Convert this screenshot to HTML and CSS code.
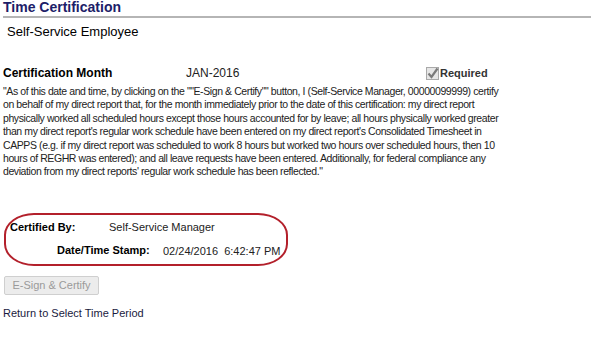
FILE: index.html
```html
<!DOCTYPE html>
<html lang="en">
<head>
    <meta charset="UTF-8">
    <title>Time Certification</title>
    <link rel="stylesheet" href="styles.css">
</head>
<body>
    <div class="page">
        <h1 class="page-title">Time Certification</h1>
        <div class="employee">Self-Service Employee</div>

        <div class="month-row">
            <span class="label month-label">Certification Month</span>
            <span class="month-value">JAN-2016</span>
            <label class="required">
                <span class="check">
                    <svg width="13" height="13" viewBox="0 0 13 13">
                        <rect x="0.5" y="0.5" width="12" height="12" fill="#e6e6e6" stroke="#a9a9a9"/>
                        <path d="M2.5 6.5 L5.5 10 L11.5 1.5" fill="none" stroke="#7a7a7a" stroke-width="2.2"/>
                    </svg>
                </span>
                Required
            </label>
        </div>

        <p class="statement">"As of this date and time, by clicking on the ""E-Sign &amp; Certify"" button, I (Self-Service Manager, 00000099999) certify<br>
            on behalf of my direct report that, for the month immediately prior to the date of this certification: my direct report<br>
            physically worked all scheduled hours except those hours accounted for by leave; all hours physically worked greater<br>
            than my direct report's regular work schedule have been entered on my direct report's Consolidated Timesheet in<br>
            CAPPS (e.g. if my direct report was scheduled to work 8 hours but worked two hours over scheduled hours, then 10<br>
            hours of REGHR was entered); and all leave requests have been entered. Additionally, for federal compliance any<br>
            deviation from my direct reports' regular work schedule has been reflected."</p>

        <div class="certified">
            <div class="cert-row">
                <span class="label cert-by">Certified By:</span>
                <span class="cert-value">Self-Service Manager</span>
            </div>
            <div class="cert-row">
                <span class="label cert-stamp">Date/Time Stamp:</span>
                <span class="cert-value stamp-value">02/24/2016&nbsp;&nbsp;6:42:47 PM</span>
            </div>
        </div>

        <button class="sign-btn" disabled>E-Sign &amp; Certify</button>

        <a class="return-link" href="#">Return to Select Time Period</a>
    </div>
</body>
</html>
```

FILE: styles.css
```css
* {
    margin: 0;
    padding: 0;
    box-sizing: border-box;
    font-family: 'Liberation Sans', Arial, sans-serif;
}

body {
    background: #fff;
    color: #000;
}

.page {
    width: 600px;
    padding: 0 10px 0 3px;
}

.page-title {
    font-size: 14px;
    font-weight: bold;
    color: #1c2068;
    line-height: 15px;
    padding-bottom: 1px;
    border-bottom: 2px solid #b5b5b5;
    width: 588px;
}

.employee {
    font-size: 13px;
    margin: 6px 0 0 4px;
    line-height: 16px;
}

.month-row {
    display: flex;
    align-items: center;
    margin-top: 25px;
    height: 16px;
}

.label {
    font-weight: bold;
}

.month-label {
    width: 183px;
    font-size: 12px;
}

.month-value {
    width: 240px;
    font-size: 12px;
    color: #222;
}

.required {
    display: flex;
    align-items: center;
    gap: 1px;
    font-size: 11px;
    font-weight: bold;
    color: #333;
}

.check svg {
    display: block;
}

.statement {
    font-size: 10.5px;
    letter-spacing: -0.41px;
    line-height: 13.4px;
    color: #222;
    white-space: nowrap;
    margin-top: 4px;
}

.certified {
    width: 284px;
    height: 53px;
    margin: 34px 0 0 1px;
    border: 2px solid #b3202b;
    border-radius: 30px / 22px;
    padding: 5px 0 0 4px;
    font-size: 11px;
}

.cert-row {
    display: flex;
    line-height: 14px;
}

.cert-row + .cert-row {
    margin-top: 9px;
}

.cert-by {
    width: 99px;
}

.cert-stamp {
    margin-left: 47px;
    width: 106px;
}

.cert-value {
    color: #222;
}

.stamp-value {
    margin-top: 1px;
}

.sign-btn {
    display: block;
    margin: 10px 0 0 1px;
    width: 95px;
    height: 19px;
    background: #ececec;
    border: 1px solid #cfcfcf;
    border-radius: 2px;
    color: #9a9a9a;
    font-size: 11px;
}

.return-link {
    display: block;
    margin-top: 12px;
    font-size: 11px;
    line-height: 13px;
    color: #1a1a40;
    text-decoration: none;
}
```
